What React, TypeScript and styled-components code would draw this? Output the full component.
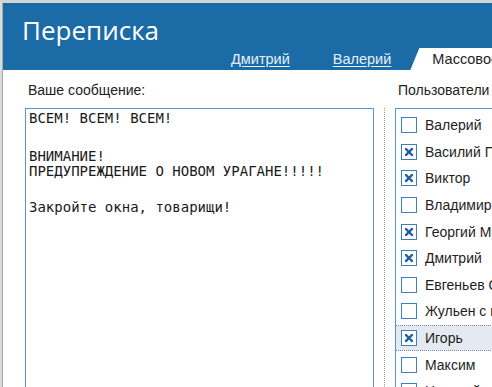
import React from "react";
import styled, { createGlobalStyle } from "styled-components";

const GlobalStyle = createGlobalStyle`
  html, body {
    margin: 0;
    padding: 0;
    background: #ffffff;
    overflow: hidden;
  }
`;

interface User {
  name: string;
  checked: boolean;
  selected?: boolean;
}

const users: User[] = [
  { name: "Валерий", checked: false },
  { name: "Василий Петрович", checked: true },
  { name: "Виктор", checked: true },
  { name: "Владимир Ильич", checked: false },
  { name: "Георгий Михайлович", checked: true },
  { name: "Дмитрий", checked: true },
  { name: "Евгеньев Олег", checked: false },
  { name: "Жульен с грибами", checked: false },
  { name: "Игорь", checked: true, selected: true },
  { name: "Максим", checked: false },
  { name: "Николай", checked: false },
];

const Window = styled.div`
  width: 100vw;
  height: 100vh;
  box-sizing: border-box;
  border-top: 3px solid #d3d3d3;
  border-left: 2px solid #dadada;
  box-shadow: inset 1px 0 0 #a9a9a9;
  padding-left: 1px;
  display: flex;
  flex-direction: column;
  overflow: hidden;
  font-family: "Liberation Sans", Arial, sans-serif;
`;

const Header = styled.header`
  height: 67px;
  flex: none;
  background: #1b6ba7;
  display: flex;
  flex-direction: column;
`;

const Title = styled.h1`
  margin: 0;
  padding: 10px 0 0 19px;
  height: 35px;
  font-family: "Open Sans", sans-serif;
  font-weight: 400;
  font-size: 26px;
  line-height: 34px;
  color: #ffffff;
  white-space: nowrap;
`;

const TabBar = styled.nav`
  margin-top: auto;
  height: 22px;
  display: flex;
  align-items: flex-end;
  padding-left: 228px;
  white-space: nowrap;
`;

const TabLink = styled.a<{ $gap: number }>`
  font-size: 14.5px;
  line-height: 22px;
  color: #e6f0fa;
  text-decoration: underline;
  text-underline-offset: 2px;
  margin-right: ${(p) => p.$gap}px;
  cursor: pointer;
`;

const ActiveTab = styled.div`
  height: 22px;
  width: 200px;
  flex: none;
  background: #ffffff;
  clip-path: polygon(9px 0, 100% 0, 100% 100%, 0 100%);
  padding-left: 22px;
  font-size: 14.5px;
  line-height: 22px;
  color: #1e1e1e;
`;

const Body = styled.main`
  flex: 1;
  display: grid;
  grid-template-columns: 349px 1px 200px;
  grid-template-rows: 38px 1fr;
  column-gap: 10px;
  padding-left: 22px;
`;

const Label = styled.div<{ $col: number }>`
  grid-column: ${(p) => p.$col};
  align-self: center;
  padding: 1px 0 0 3px;
  font-size: 14px;
  color: #222222;
  white-space: nowrap;
`;

const Message = styled.div`
  grid-column: 1;
  grid-row: 2;
  border: 1px solid #5796cf;
  border-bottom: none;
  padding: 2px 3px;
  font-family: "DejaVu Sans Mono", monospace;
  font-size: 14px;
  line-height: 15px;
  color: #1a1a1a;
`;

const Paragraph = styled.p<{ $after: number }>`
  margin: 0 0 ${(p) => p.$after}px;
  white-space: pre-line;
`;

const Divider = styled.div`
  grid-column: 2;
  grid-row: 2;
  border-left: 1px dotted #9a9a9a;
`;

const UserList = styled.ul`
  grid-column: 3;
  grid-row: 2;
  margin: 0;
  padding: 3px 0 0;
  list-style: none;
  border: 1px solid #5796cf;
  border-right: none;
  border-bottom: none;
  overflow: hidden;
`;

const UserRow = styled.li<{ $selected?: boolean }>`
  height: 26.6px;
  box-sizing: border-box;
  display: flex;
  align-items: center;
  gap: 8px;
  padding-left: 5px;
  font-size: 14px;
  color: #1e1e1e;
  white-space: nowrap;
  background: ${(p) => (p.$selected ? "#e5e9f0" : "transparent")};
  border-top: 1px dotted ${(p) => (p.$selected ? "#7d8fa8" : "transparent")};
  border-bottom: 1px dotted ${(p) => (p.$selected ? "#7d8fa8" : "transparent")};
`;

const Box = styled.span`
  width: 16px;
  height: 16px;
  flex: none;
  box-sizing: border-box;
  border: 1px solid #3f7fbd;
  background: #ffffff;
  display: flex;
  align-items: center;
  justify-content: center;
`;

const Cross = () => (
  <svg width="8" height="8" viewBox="0 0 8 8">
    <path d="M1 1 L7 7 M7 1 L1 7" stroke="#1d5fa5" strokeWidth="2.4" strokeLinecap="square" />
  </svg>
);

const App = () => {
  return (
    <>
      <GlobalStyle />
      <Window>
        <Header>
          <Title>Переписка</Title>
          <TabBar>
            <TabLink $gap={43}>Дмитрий</TabLink>
            <TabLink $gap={19}>Валерий</TabLink>
            <ActiveTab>Массовое сообщение</ActiveTab>
          </TabBar>
        </Header>
        <Body>
          <Label $col={1}>Ваше сообщение:</Label>
          <Label $col={3}>Пользователи</Label>
          <Message>
            <Paragraph $after={23}>ВСЕМ! ВСЕМ! ВСЕМ!</Paragraph>
            <Paragraph $after={21}>{"ВНИМАНИЕ!\nПРЕДУПРЕЖДЕНИЕ О НОВОМ УРАГАНЕ!!!!!"}</Paragraph>
            <Paragraph $after={0}>Закройте окна, товарищи!</Paragraph>
          </Message>
          <Divider />
          <UserList>
            {users.map((u) => (
              <UserRow key={u.name} $selected={u.selected}>
                <Box>{u.checked && <Cross />}</Box>
                {u.name}
              </UserRow>
            ))}
          </UserList>
        </Body>
      </Window>
    </>
  );
};

export default App;
